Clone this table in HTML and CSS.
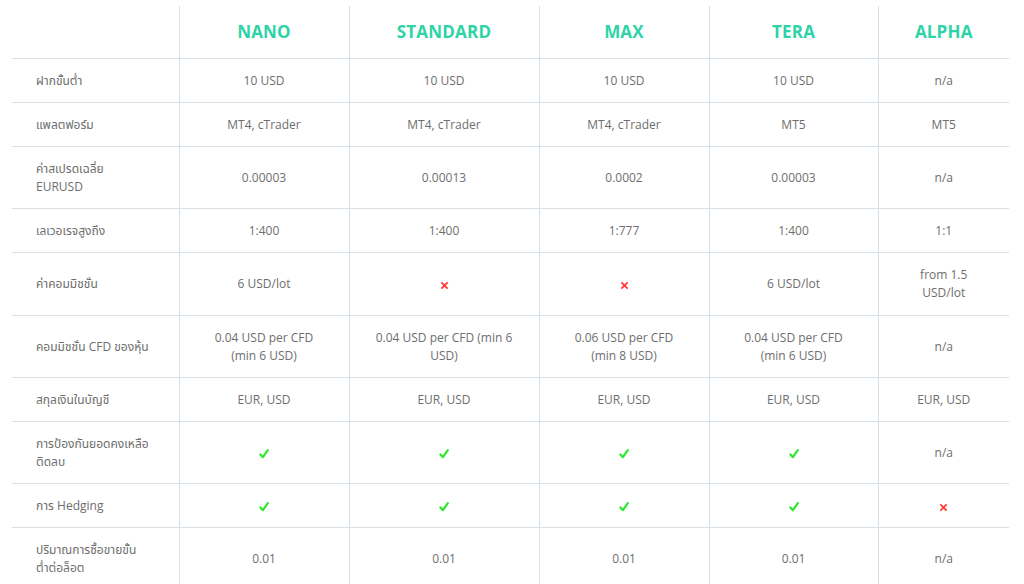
FILE: index.html
```html
<!DOCTYPE html>
<html lang="th">
<head>
<meta charset="utf-8">
<title>Account comparison</title>
<link rel="stylesheet" href="styles.css">
</head>
<body>
<div class="wrap">
<table class="compare">
  <colgroup>
    <col class="c-label"><col class="c-nano"><col class="c-std"><col class="c-max"><col class="c-tera"><col class="c-alpha">
  </colgroup>
  <thead>
    <tr>
      <th class="blank"></th>
      <th>NANO</th>
      <th>STANDARD</th>
      <th>MAX</th>
      <th>TERA</th>
      <th>ALPHA</th>
    </tr>
  </thead>
  <tbody>
    <tr>
      <td class="label">ฝากขั้นต่ำ</td>
      <td>10 USD</td><td>10 USD</td><td>10 USD</td><td>10 USD</td><td>n/a</td>
    </tr>
    <tr>
      <td class="label">แพลตฟอร์ม</td>
      <td>MT4, cTrader</td><td>MT4, cTrader</td><td>MT4, cTrader</td><td>MT5</td><td>MT5</td>
    </tr>
    <tr class="tall">
      <td class="label">ค่าสเปรดเฉลี่ย<br>EURUSD</td>
      <td>0.00003</td><td>0.00013</td><td>0.0002</td><td>0.00003</td><td>n/a</td>
    </tr>
    <tr>
      <td class="label">เลเวอเรจสูงถึง</td>
      <td>1:400</td><td>1:400</td><td>1:777</td><td>1:400</td><td>1:1</td>
    </tr>
    <tr class="tall">
      <td class="label">ค่าคอมมิชชั่น</td>
      <td>6 USD/lot</td>
      <td><svg class="ico" viewBox="0 0 10 10" width="9" height="9"><path d="M1.5 1.5 L8.5 8.5 M8.5 1.5 L1.5 8.5" stroke="#ff3b3b" stroke-width="2" fill="none"/></svg></td>
      <td><svg class="ico" viewBox="0 0 10 10" width="9" height="9"><path d="M1.5 1.5 L8.5 8.5 M8.5 1.5 L1.5 8.5" stroke="#ff3b3b" stroke-width="2" fill="none"/></svg></td>
      <td>6 USD/lot</td>
      <td>from 1.5 USD/lot</td>
    </tr>
    <tr class="tall">
      <td class="label">คอมมิชชั่น CFD ของหุ้น</td>
      <td>0.04 USD per CFD (min 6 USD)</td>
      <td>0.04 USD per CFD (min 6 USD)</td>
      <td>0.06 USD per CFD (min 8 USD)</td>
      <td>0.04 USD per CFD (min 6 USD)</td>
      <td>n/a</td>
    </tr>
    <tr>
      <td class="label">สกุลเงินในบัญชี</td>
      <td>EUR, USD</td><td>EUR, USD</td><td>EUR, USD</td><td>EUR, USD</td><td>EUR, USD</td>
    </tr>
    <tr class="tall">
      <td class="label">การป้องกันยอดคงเหลือ<br>ติดลบ</td>
      <td><svg class="ico" viewBox="0 0 10 10" width="10" height="10"><path d="M1.4 5.4 L3.9 8.2 L8.8 1.2" stroke="#2ee62e" stroke-width="2.2" fill="none" stroke-linecap="round" stroke-linejoin="round"/></svg></td>
      <td><svg class="ico" viewBox="0 0 10 10" width="10" height="10"><path d="M1.4 5.4 L3.9 8.2 L8.8 1.2" stroke="#2ee62e" stroke-width="2.2" fill="none" stroke-linecap="round" stroke-linejoin="round"/></svg></td>
      <td><svg class="ico" viewBox="0 0 10 10" width="10" height="10"><path d="M1.4 5.4 L3.9 8.2 L8.8 1.2" stroke="#2ee62e" stroke-width="2.2" fill="none" stroke-linecap="round" stroke-linejoin="round"/></svg></td>
      <td><svg class="ico" viewBox="0 0 10 10" width="10" height="10"><path d="M1.4 5.4 L3.9 8.2 L8.8 1.2" stroke="#2ee62e" stroke-width="2.2" fill="none" stroke-linecap="round" stroke-linejoin="round"/></svg></td>
      <td>n/a</td>
    </tr>
    <tr>
      <td class="label">การ Hedging</td>
      <td><svg class="ico" viewBox="0 0 10 10" width="10" height="10"><path d="M1.4 5.4 L3.9 8.2 L8.8 1.2" stroke="#2ee62e" stroke-width="2.2" fill="none" stroke-linecap="round" stroke-linejoin="round"/></svg></td>
      <td><svg class="ico" viewBox="0 0 10 10" width="10" height="10"><path d="M1.4 5.4 L3.9 8.2 L8.8 1.2" stroke="#2ee62e" stroke-width="2.2" fill="none" stroke-linecap="round" stroke-linejoin="round"/></svg></td>
      <td><svg class="ico" viewBox="0 0 10 10" width="10" height="10"><path d="M1.4 5.4 L3.9 8.2 L8.8 1.2" stroke="#2ee62e" stroke-width="2.2" fill="none" stroke-linecap="round" stroke-linejoin="round"/></svg></td>
      <td><svg class="ico" viewBox="0 0 10 10" width="10" height="10"><path d="M1.4 5.4 L3.9 8.2 L8.8 1.2" stroke="#2ee62e" stroke-width="2.2" fill="none" stroke-linecap="round" stroke-linejoin="round"/></svg></td>
      <td><svg class="ico" viewBox="0 0 10 10" width="9" height="9"><path d="M1.5 1.5 L8.5 8.5 M8.5 1.5 L1.5 8.5" stroke="#ff3b3b" stroke-width="2" fill="none"/></svg></td>
    </tr>
    <tr class="tall">
      <td class="label">ปริมาณการซื้อขายขั้น<br>ต่ำต่อล็อต</td>
      <td>0.01</td><td>0.01</td><td>0.01</td><td>0.01</td><td>n/a</td>
    </tr>
  </tbody>
</table>
</div>
</body>
</html>
```

FILE: styles.css
```css
html, body {
  margin: 0;
  padding: 0;
  background: #ffffff;
}

body {
  font-family: "Open Sans", "Noto Sans Thai", "Noto Sans", sans-serif;
  color: #6e6e6e;
  font-size: 12px;
  line-height: 18px;
}

.wrap {
  padding: 6px 15px 0 12px;
}

.compare {
  width: 997px;
  border-collapse: collapse;
  table-layout: fixed;
}

.c-label { width: 167px; }
.c-nano { width: 170px; }
.c-std { width: 190px; }
.c-max { width: 170px; }
.c-tera { width: 169px; }
.c-alpha { width: 131px; }

.compare th {
  height: 52px;
  padding: 0 8px;
  box-sizing: border-box;
  font-size: 17px;
  font-weight: 700;
  color: #2ed3a6;
  text-align: center;
  vertical-align: middle;
  border-left: 1px solid #d7e0e7;
  border-bottom: 1px solid #d7e0e7;
  letter-spacing: 0.2px;
}

.compare th.blank {
  border-left: none;
}

.compare td {
  padding: 13px 24px 12.2px;
  text-align: center;
  vertical-align: middle;
  border-left: 1px solid #d7e0e7;
  border-bottom: 1px solid #d7e0e7;
}

.compare tr.tall td {
  padding-bottom: 12.25px;
}

.compare td.label {
  text-align: left;
  border-left: none;
  padding-left: 24px;
  padding-right: 8px;
}

.ico {
  display: inline-block;
  vertical-align: middle;
}
```
